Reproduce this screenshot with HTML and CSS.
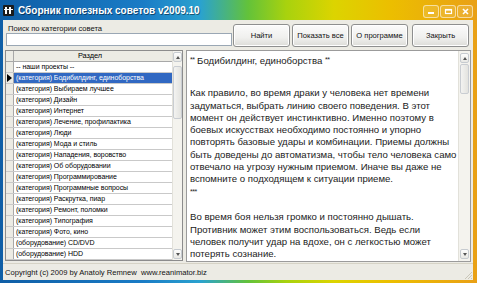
FILE: index.html
```html
<!DOCTYPE html>
<html lang="ru">
<head>
  <meta charset="UTF-8" />
  <title>Сборник полезных советов v2009.10</title>
  <link rel="stylesheet" href="styles.css">
</head>
<body>
  <div class="window">
    <div class="titlebar">
      <svg class="app-icon" width="11" height="11" viewBox="0 0 11 11">
        <rect x="0" y="0" width="11" height="11" rx="1" fill="#1b1b1b"/>
        <rect x="2" y="2" width="2" height="7" fill="#fff"/>
        <rect x="6" y="2" width="2" height="7" fill="#fff"/>
        <rect x="1" y="4" width="9" height="1" fill="#fff"/>
      </svg>
      <span class="title">Сборник полезных советов v2009.10</span>
      <div class="caption-buttons">
        <span class="cap-btn"><svg width="9" height="7" viewBox="0 0 9 7"><rect x="1" y="4" width="6" height="2" fill="#fff"/></svg></span>
        <span class="cap-btn"><svg width="9" height="7" viewBox="0 0 9 7"><rect x="1.5" y="1.5" width="6" height="4" fill="none" stroke="#fff" stroke-width="1.2"/><rect x="1" y="1" width="7" height="1.6" fill="#fff"/></svg></span>
        <span class="cap-btn close"><svg width="9" height="7" viewBox="0 0 9 7"><path d="M2 1 L7 6 M7 1 L2 6" stroke="#fff" stroke-width="1.6"/></svg></span>
      </div>
    </div>

    <div class="client">
      <div class="toolbar">
        <div class="search">
          <div class="search-label">Поиск по категории совета</div>
          <div class="search-input"></div>
        </div>
        <button class="btn btn-find">Найти</button>
        <button class="btn">Показать все</button>
        <button class="btn">О программе</button>
        <button class="btn btn-close">Закрыть</button>
      </div>

      <div class="main">
        <div class="grid">
          <div class="grid-body">
            <div class="row head">
              <div class="ind"></div>
              <div class="cell">Раздел</div>
            </div>
            <div class="row"><div class="ind"></div><div class="cell">-- наши проекты --</div></div>
            <div class="row current"><div class="ind"><span class="arrow"></span></div><div class="cell">(категория) Бодибилдинг, единоборства</div></div>
            <div class="row"><div class="ind"></div><div class="cell">(категория) Выбираем лучшее</div></div>
            <div class="row"><div class="ind"></div><div class="cell">(категория) Дизайн</div></div>
            <div class="row"><div class="ind"></div><div class="cell">(категория) Интернет</div></div>
            <div class="row"><div class="ind"></div><div class="cell">(категория) Лечение, профилактика</div></div>
            <div class="row"><div class="ind"></div><div class="cell">(категория) Люди</div></div>
            <div class="row"><div class="ind"></div><div class="cell">(категория) Мода и стиль</div></div>
            <div class="row"><div class="ind"></div><div class="cell">(категория) Нападения, воровство</div></div>
            <div class="row"><div class="ind"></div><div class="cell">(категория) Об оборудовании</div></div>
            <div class="row"><div class="ind"></div><div class="cell">(категория) Программирование</div></div>
            <div class="row"><div class="ind"></div><div class="cell">(категория) Программные вопросы</div></div>
            <div class="row"><div class="ind"></div><div class="cell">(категория) Раскрутка, пиар</div></div>
            <div class="row"><div class="ind"></div><div class="cell">(категория) Ремонт, поломки</div></div>
            <div class="row"><div class="ind"></div><div class="cell">(категория) Типография</div></div>
            <div class="row"><div class="ind"></div><div class="cell">(категория) Фото, кино</div></div>
            <div class="row"><div class="ind"></div><div class="cell">(оборудование) CD/DVD</div></div>
            <div class="row"><div class="ind"></div><div class="cell">(оборудование) HDD</div></div>
          </div>
          <div class="vscroll grid-scroll">
            <span class="sb-btn up"></span>
            <span class="sb-thumb"></span>
            <span class="sb-fill"></span>
            <span class="sb-btn down"></span>
          </div>
        </div>

        <div class="memo">
          <div class="memo-text">
            <p class="memo-title"><span class="stars">**</span> Бодибилдинг, единоборства <span class="stars">**</span></p>
            <p>Как правило, во время драки у человека нет времени<br>
            задуматься, выбрать линию своего поведения. В этот<br>
            момент он действует инстинктивно. Именно поэтому в<br>
            боевых искусствах необходимо постоянно и упорно<br>
            повторять базовые удары и комбинации. Приемы должны<br>
            быть доведены до автоматизма, чтобы тело человека само<br>
            отвечало на угрозу нужным приемом. Иначе вы даже не<br>
            вспомните о подходящем к ситуации приеме.<br>
            <span class="stars">***</span></p>
            <p class="gap">Во время боя нельзя громко и постоянно дышать.<br>
            Противник может этим воспользоваться. Ведь если<br>
            человек получит удар на вдохе, он с легкостью может<br>
            потерять сознание.</p>
          </div>
          <div class="vscroll memo-scroll">
            <span class="sb-btn up"></span>
            <span class="sb-thumb"></span>
            <span class="sb-fill"></span>
            <span class="sb-btn down"></span>
          </div>
        </div>
      </div>

      <div class="statusbar">
        <span>Copyright (c) 2009 by Anatoly Remnew&nbsp; www.reanimator.biz</span>
        <svg class="grip" width="10" height="10" viewBox="0 0 10 10">
          <path d="M9 2 L2 9 M9 5 L5 9 M9 8 L8 9" stroke="#c9c6b8" stroke-width="1"/>
        </svg>
      </div>
    </div>
  </div>
</body>
</html>
```

FILE: styles.css
```css
* {
  box-sizing: border-box;
}
body {
  margin: 0;
  background: #ffffff;
  font-family: 'Liberation Sans', Arial, sans-serif;
}
.window {
  width: 477px;
  height: 283px;
  display: flex;
  flex-direction: column;
  background: linear-gradient(to right, #0f5ea6 0%, #1a7cc6 30%, #2aa2cf 42%, #63c23a 52%, #a8d20e 60%, #dcd400 70%, #ecbe00 82%, #e9a016 100%);
}
.titlebar {
  height: 20px;
  display: flex;
  align-items: center;
  padding: 0 4px 0 3px;
  color: #fff;
}
.app-icon {
  flex: none;
  margin-right: 4px;
}
.title {
  font-size: 10px;
  font-weight: bold;
  text-shadow: 1px 1px 0 rgba(0, 0, 0, 0.45);
}
.caption-buttons {
  margin-left: auto;
  display: flex;
  gap: 1px;
  margin-top: 2px;
}
.cap-btn {
  width: 16px;
  height: 13px;
  display: flex;
  align-items: center;
  justify-content: center;
  border: 1px solid rgba(255, 255, 255, 0.55);
  border-radius: 3px;
  background: rgba(255, 255, 255, 0.12);
}

.client {
  flex: 1;
  margin: 0 4px 3px 3px;
  background: #ecebe4;
  display: flex;
  flex-direction: column;
  font-size: 8px;
  color: #000;
}
.toolbar {
  height: 30px;
  display: flex;
  padding: 4px 0 0 3px;
}
.search {
  width: 226px;
}
.search-label {
  height: 9px;
  line-height: 9px;
  padding-left: 2px;
  font-size: 7.6px;
  color: #111;
}
.search-input {
  height: 13px;
  background: #fff;
  border: 1px solid #9aa7b4;
}
.btn {
  width: 57px;
  height: 23px;
  margin: 0 0 0 2px;
  padding: 0;
  font-family: inherit;
  font-size: 7.6px;
  color: #111;
  border: 1px solid #8e8f8f;
  border-radius: 3px;
  background: linear-gradient(#fbfbfb, #f0f0ee 60%, #dcdcd8);
  box-shadow: inset 0 0 0 1px #fff;
}
.btn-find {
  margin-left: 1px;
}
.btn-close {
  margin-left: 4px;
}

.main {
  height: 212px;
  display: flex;
  gap: 3px;
  padding: 0 2px;
}
.grid {
  width: 178px;
  height: 211px;
  display: flex;
  border: 1px solid #8c8c8c;
  background: #fff;
}
.grid-body {
  flex: 1;
}
.row {
  height: 11px;
  display: flex;
  border-bottom: 1px solid #c9c9c9;
}
.row.head {
  height: 11px;
  border-bottom: 1px solid #a8a8a8;
}
.ind {
  width: 8px;
  background: #ecebe4;
  border-right: 1px solid #a8a8a8;
  display: flex;
  align-items: center;
  justify-content: center;
}
.cell {
  flex: 1;
  padding-left: 2px;
  line-height: 10px;
  font-size: 7px;
  letter-spacing: -0.05px;
  white-space: nowrap;
  overflow: hidden;
}
.head .cell {
  background: #ecebe4;
  text-align: center;
  padding-left: 0;
  padding-right: 6px;
  font-size: 7.4px;
}
.current .cell {
  background: #3168c2;
  color: #fff;
}
.arrow {
  width: 0;
  height: 0;
  border-top: 4px solid transparent;
  border-bottom: 4px solid transparent;
  border-left: 5px solid #000;
}

.vscroll {
  flex: none;
  display: flex;
  flex-direction: column;
  background: #f4f3ee;
  border-left: 1px solid #e2e1da;
}
.grid-scroll {
  width: 10px;
  padding: 1px 0;
}
.grid-scroll .sb-thumb {
  height: 53px;
  margin-top: 4px;
}
.memo-scroll {
  width: 12px;
  padding: 2px 1px;
}
.memo-scroll .sb-thumb {
  height: 30px;
  margin-top: 1px;
}
.sb-btn {
  height: 10px;
  border: 1px solid #c6cbd0;
  border-radius: 2px;
  background: linear-gradient(#fdfdfd, #e8e8e4);
  display: flex;
  align-items: center;
  justify-content: center;
}
.sb-btn::after {
  content: "";
  width: 0;
  height: 0;
  border-left: 2.5px solid transparent;
  border-right: 2.5px solid transparent;
}
.sb-btn.up::after {
  border-bottom: 3px solid #555;
}
.sb-btn.down::after {
  border-top: 3px solid #555;
}
.sb-thumb {
  border: 1px solid #c9cdd2;
  border-radius: 2px;
  background: linear-gradient(to right, #f3f3f1, #e3e3df);
}
.sb-fill {
  flex: 1;
}

.memo {
  width: 285px;
  height: 212px;
  display: flex;
  border: 1px solid #9b9b9b;
  background: #fff;
}
.memo-text {
  flex: 1;
  padding: 3px 0 0 3px;
  font-size: 9.6px;
  line-height: 12.3px;
  color: #222;
  white-space: nowrap;
}
.memo-text p {
  margin: 0;
}
.memo-title {
  margin-bottom: 20px !important;
}
.memo-text .gap {
  margin-top: 12.3px;
}
.stars {
  font-size: 7px;
  vertical-align: 2px;
  letter-spacing: -0.5px;
}

.statusbar {
  flex: 1;
  margin-top: 1px;
  border-top: 1px solid #d6d3c6;
  display: flex;
  align-items: center;
  justify-content: space-between;
  padding: 0 0 0 2px;
  font-size: 7.6px;
  color: #111;
}
.grip {
  align-self: flex-end;
}
```
